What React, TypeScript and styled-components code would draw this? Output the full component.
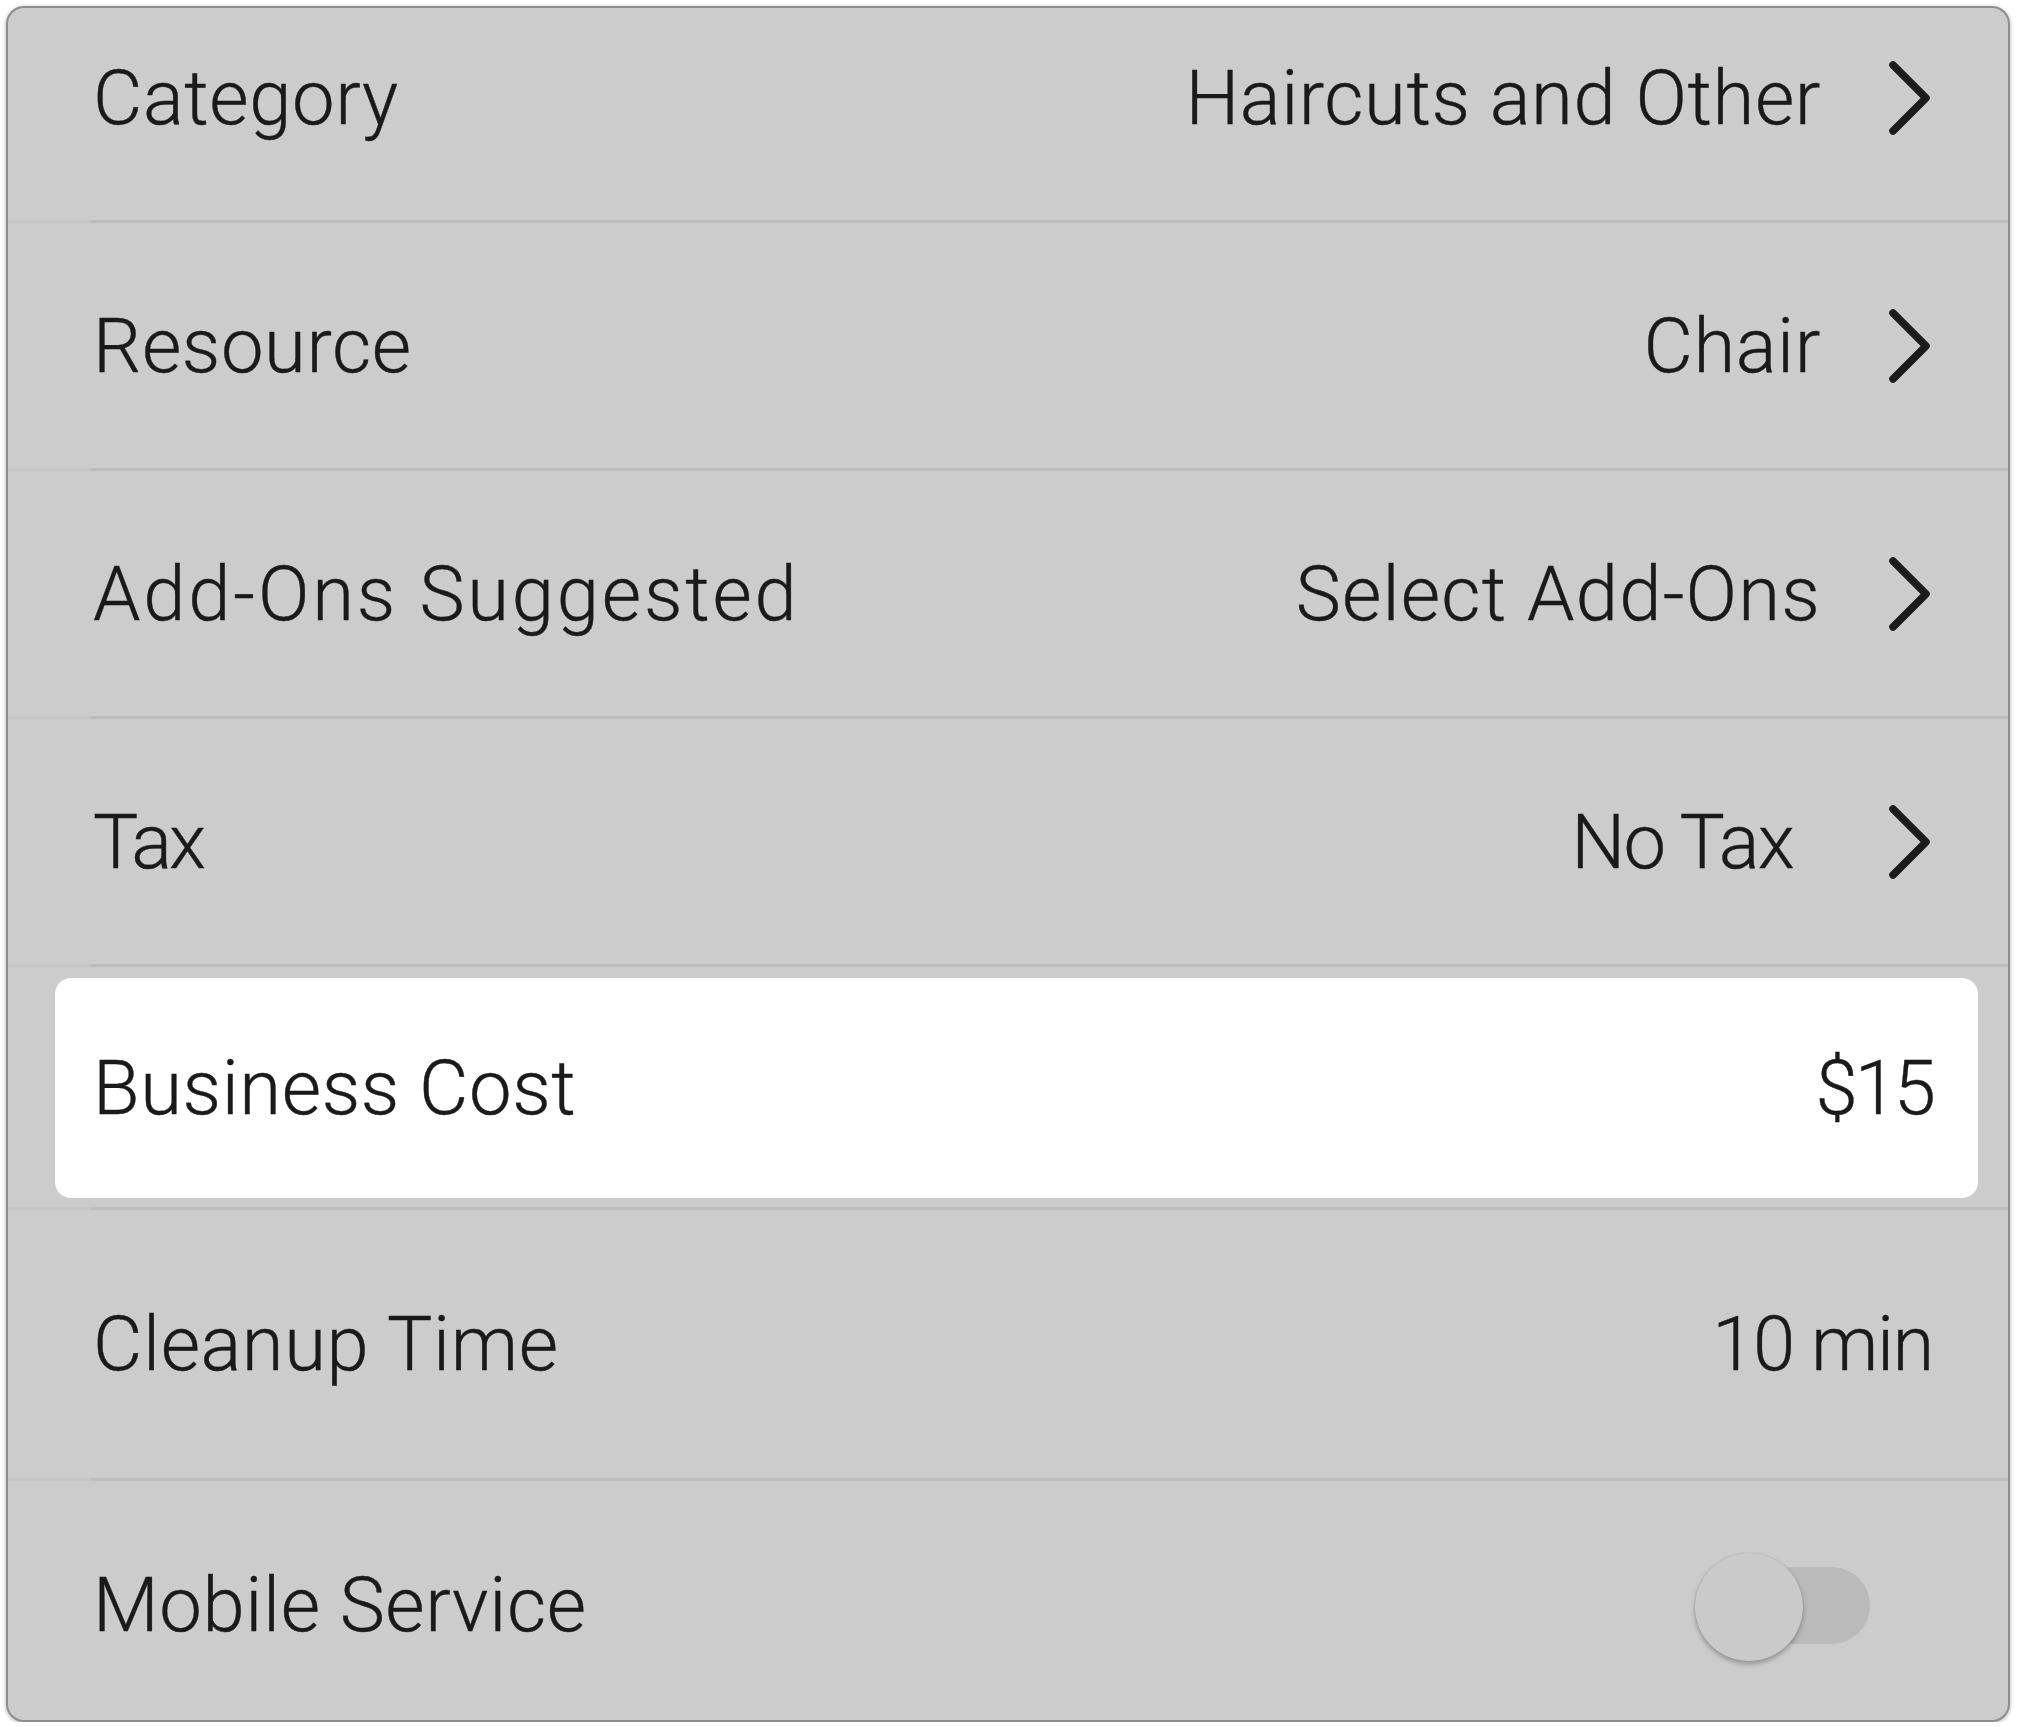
import * as React from "react";
import styled, { createGlobalStyle } from "styled-components";

const GlobalStyle = createGlobalStyle`
  html, body {
    margin: 0;
    padding: 0;
    background: #ffffff;
  }
  body {
    font-family: Roboto, "Liberation Sans", sans-serif;
  }
`;

const Page = styled("div")`
  padding: 6px 0 0 6px;
`;

const Card = styled("div")`
  width: 2004px;
  height: 1716px;
  box-sizing: border-box;
  border: 2px solid #8e8e8e;
  border-radius: 18px;
  background: #cccccc;
  box-shadow: 0 1px 4px rgba(0, 0, 0, 0.3);
  overflow: hidden;
`;

const List = styled("div")`
  display: flex;
  flex-direction: column;
  margin-top: -33px;
`;

interface RowProps {
  readonly height: number;
  readonly last?: boolean;
}

const Row = styled("div")<RowProps>`
  position: relative;
  flex: none;
  height: ${({ height }) => height}px;
  box-sizing: border-box;
  display: flex;
  align-items: center;
  justify-content: space-between;
  padding: 0 75px 0 85px;
  border-bottom: ${({ last }) => (last ? "none" : "3px solid #c5c5c5")};

  &::after {
    content: "";
    display: ${({ last }) => (last ? "none" : "block")};
    position: absolute;
    left: 82px;
    right: 0;
    bottom: -3px;
    height: 3px;
    background: #bdbdbd;
  }
`;

const HighlightRow = styled("div")`
  position: relative;
  flex: none;
  height: 243px;
  box-sizing: border-box;
  padding: 11px 30px 9px 47px;
  border-bottom: 3px solid #c5c5c5;

  &::after {
    content: "";
    position: absolute;
    left: 82px;
    right: 0;
    bottom: -3px;
    height: 3px;
    background: #bdbdbd;
  }
`;

const HighlightCard = styled("div")`
  height: 220px;
  box-sizing: border-box;
  background: #ffffff;
  border-radius: 16px;
  display: flex;
  align-items: center;
  justify-content: space-between;
  padding: 0 45px 0 38px;
`;

interface TextProps {
  readonly spacing?: number;
  readonly gap?: number;
}

const Label = styled("span")<TextProps>`
  font-size: 76px;
  font-weight: 300;
  color: #1a1a1a;
  line-height: 1;
  white-space: nowrap;
  letter-spacing: ${({ spacing }) => spacing ?? 0.6}px;
  -webkit-text-stroke: 0.4px #1a1a1a;
`;

const Trailing = styled("div")`
  display: flex;
  align-items: center;
`;

const Value = styled(Label)`
  margin-right: ${({ gap }) => gap ?? 0}px;
`;

const ChevronSvg = styled("svg")`
  display: block;
  width: 48px;
  height: 80px;
`;

const Chevron = (): JSX.Element => (
  <ChevronSvg viewBox="0 0 48 80">
    <polyline
      points="8,7 41,40 8,73"
      fill="none"
      stroke="#1c1c1c"
      strokeWidth={7.5}
      strokeLinecap="round"
      strokeLinejoin="round"
    />
  </ChevronSvg>
);

const Toggle = styled("div")`
  position: relative;
  width: 165px;
  height: 77px;
  margin-right: 63px;
  border-radius: 39px;
  background: #bababa;
`;

const Knob = styled("div")`
  position: absolute;
  left: -10px;
  top: 50%;
  width: 108px;
  height: 108px;
  margin-top: -52px;
  border-radius: 50%;
  background: #cacaca;
  box-shadow: 0 3px 5px rgba(0, 0, 0, 0.28), 0 0 1px rgba(0, 0, 0, 0.2);
`;

interface Item {
  readonly label: string;
  readonly value: string;
  readonly gap?: number;
  readonly spacing?: number;
  readonly valueSpacing?: number;
}

const navItems: Item[] = [
  { label: "Category", value: "Haircuts and Other", gap: 64 },
  { label: "Resource", value: "Chair", gap: 64 },
  { label: "Add-Ons Suggested", value: "Select Add-Ons", gap: 64, spacing: 2.8, valueSpacing: 1.2 },
  { label: "Tax", value: "No Tax", gap: 92, spacing: -3, valueSpacing: -1.8 },
];

export default function App(): JSX.Element {
  return (
    <Page>
      <GlobalStyle />
      <Card>
        <List>
          {navItems.map((item) => (
            <Row key={item.label} height={248}>
              <Label spacing={item.spacing}>{item.label}</Label>
              <Trailing>
                <Value gap={item.gap} spacing={item.valueSpacing}>
                  {item.value}
                </Value>
                <Chevron />
              </Trailing>
            </Row>
          ))}

          <HighlightRow>
            <HighlightCard>
              <Label>Business Cost</Label>
              <Value spacing={-3}>$15</Value>
            </HighlightCard>
          </HighlightRow>

          <Row height={271}>
            <Label>Cleanup Time</Label>
            <Value spacing={-1.4}>10 min</Value>
          </Row>

          <Row height={248} last>
            <Label>Mobile Service</Label>
            <Toggle>
              <Knob />
            </Toggle>
          </Row>
        </List>
      </Card>
    </Page>
  );
}
